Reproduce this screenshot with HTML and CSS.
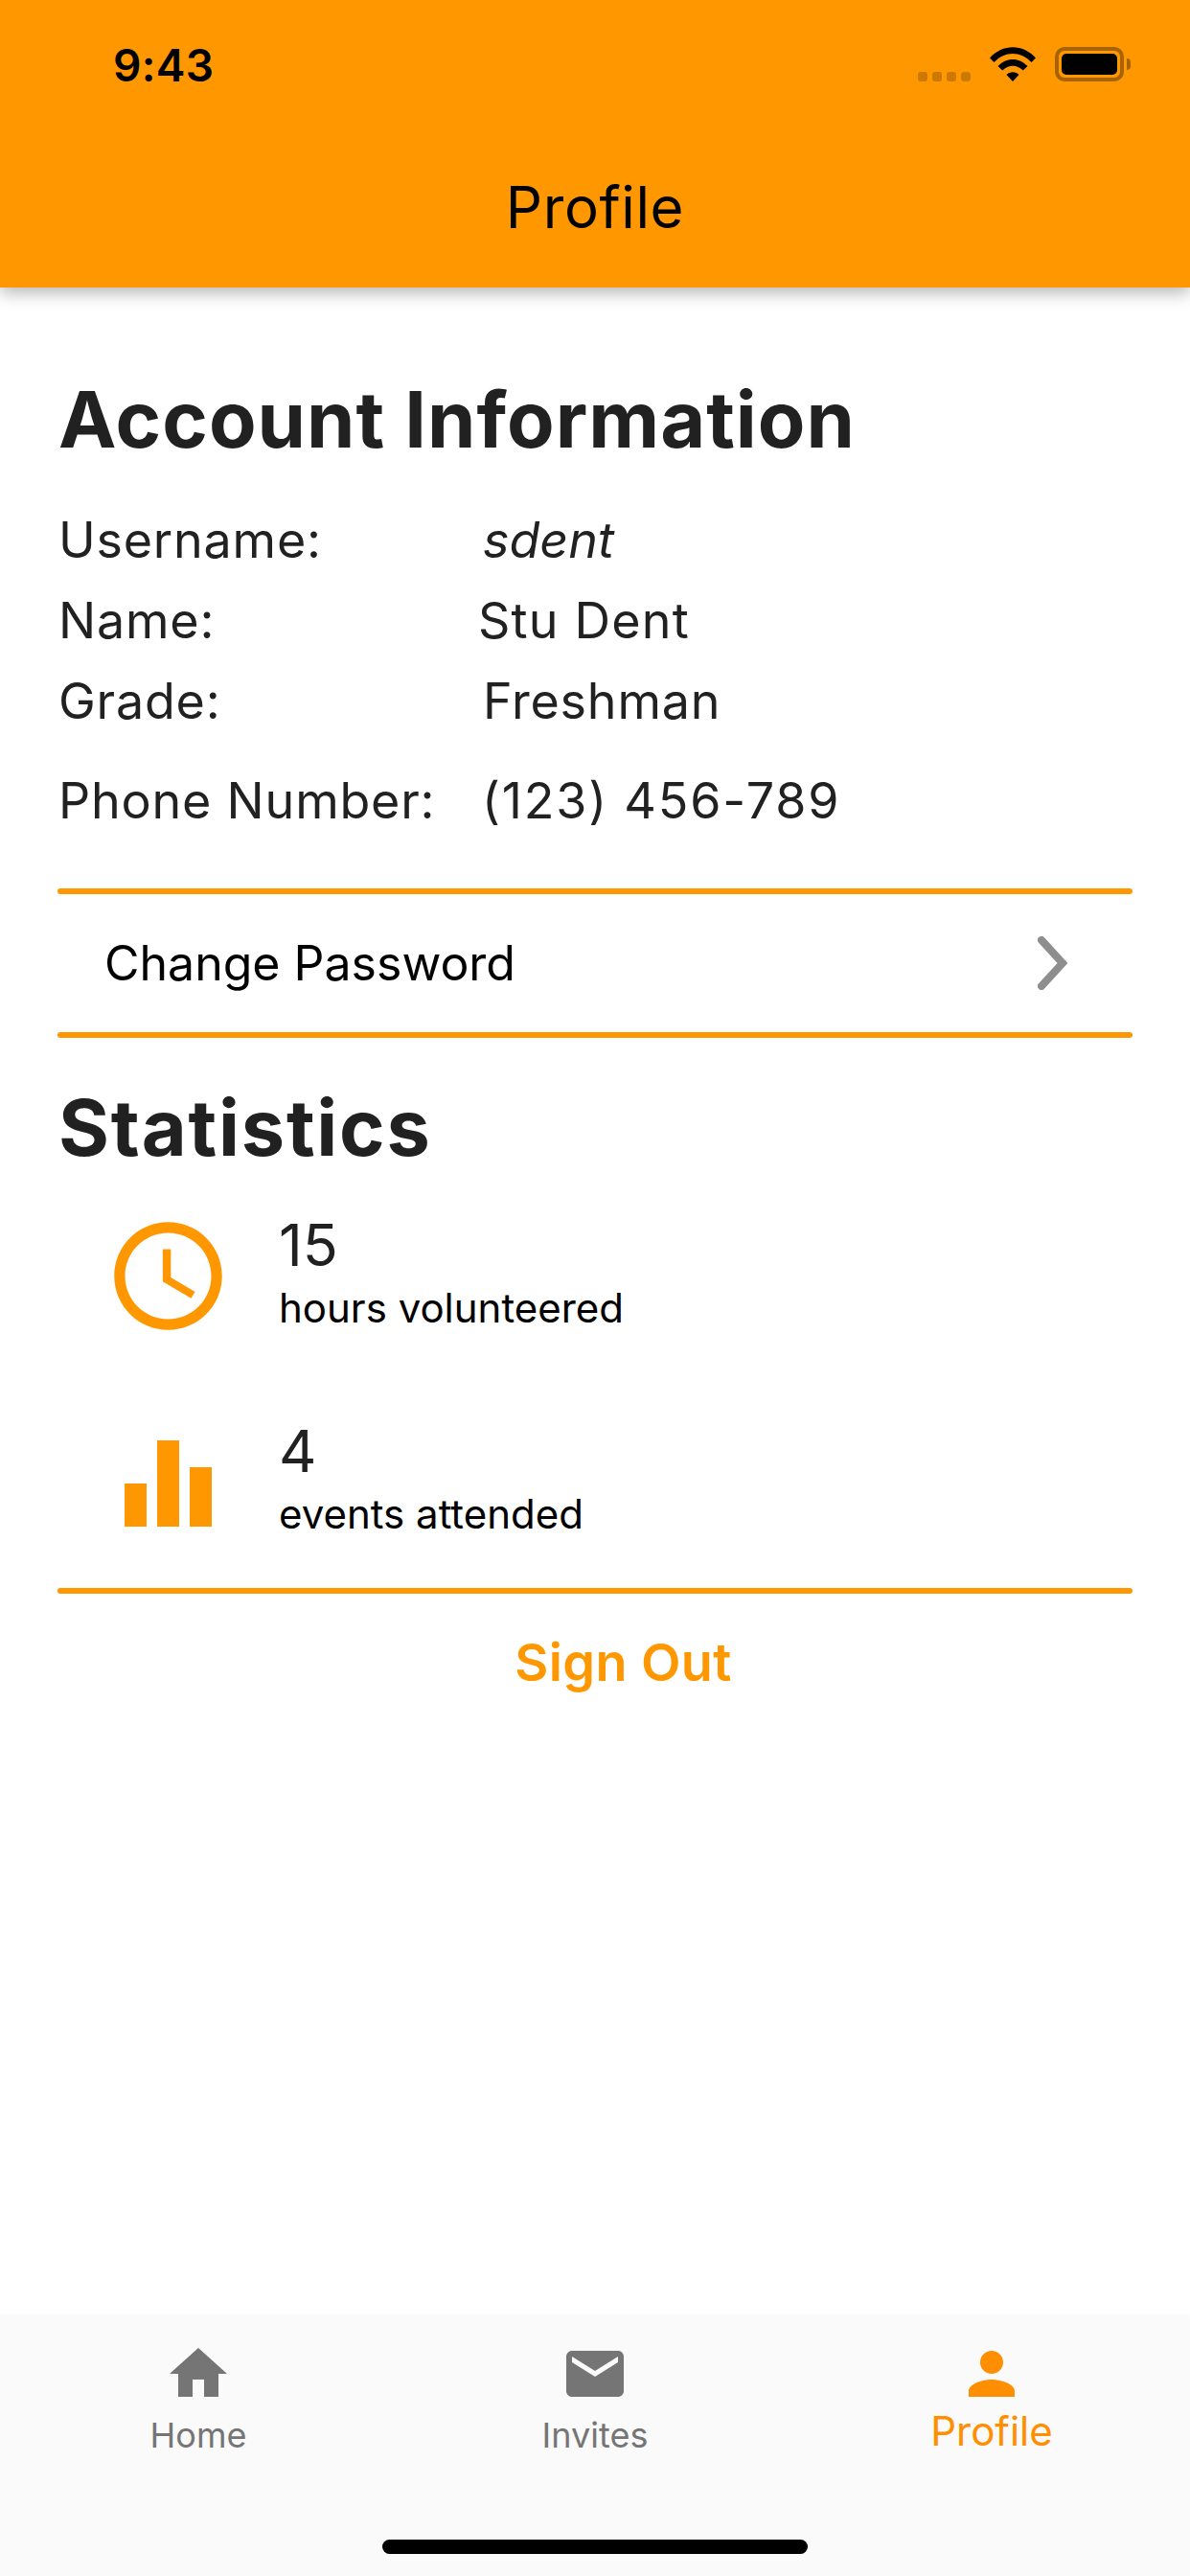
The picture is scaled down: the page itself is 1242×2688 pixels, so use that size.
FILE: index.html
```html
<!DOCTYPE html>
<html lang="en">
<head>
<meta charset="utf-8">
<title>Profile</title>
<link rel="stylesheet" href="styles.css">
</head>
<body>
<div class="screen">
  <header class="app-bar">
    <div class="status-bar">
      <span class="clock">9:43</span>
      <div class="status-icons">
        <div class="signal"><i></i><i></i><i></i><i></i></div>
        <svg class="wifi" width="48" height="36" viewBox="0 0 48 36">
          <path d="M0 11.500 C13.500 -3.500 34.500 -3.500 48 11.500 L43.500 16 C32 4 16 4 4.500 16 Z"/>
          <path d="M8.500 20 C17.500 10.500 30.500 10.500 39.500 20 L34.800 24.600 C28.500 18 19.500 18 13.200 24.600 Z"/>
          <path d="M17.500 29 C21 25.300 27 25.300 30.500 29 L24 36 Z"/>
        </svg>
        <div class="battery"><div class="battery-fill"></div></div>
      </div>
    </div>
    <h1 class="app-title">Profile</h1>
  </header>

  <main class="content">
    <h2 class="section-title">Account Information</h2>
    <dl class="info">
      <dt>Username:</dt><dd class="italic">sdent</dd>
      <dt>Name:</dt><dd class="nudge">Stu Dent</dd>
      <dt>Grade:</dt><dd>Freshman</dd>
      <dt class="phone">Phone Number:</dt><dd class="phone digits">(123) 456-789</dd>
    </dl>
    <div class="divider divider-top"></div>
    <div class="link-row">
      <span>Change Password</span>
      <svg class="chevron" width="32" height="56" viewBox="0 0 32 56">
        <path d="M4 4 L26 28 L4 52"/>
      </svg>
    </div>
    <div class="divider"></div>
    <h2 class="section-title stats-title">Statistics</h2>
    <div class="stat stat-hours">
      <svg class="stat-icon" viewBox="0 0 24 24">
        <path d="M11.990 2C6.470 2 2 6.480 2 12s4.470 10 9.990 10C17.520 22 22 17.520 22 12S17.520 2 11.990 2zM12 20c-4.420 0-8-3.580-8-8s3.580-8 8-8 8 3.580 8 8-3.580 8-8 8z"/>
        <path d="M12.500 7H11v6l5.250 3.150.75-1.230-4.500-2.670z"/>
      </svg>
      <div class="stat-text"><div class="stat-value">15</div><div class="stat-label">hours volunteered</div></div>
    </div>
    <div class="stat stat-events">
      <svg class="stat-icon" viewBox="0 0 135 135">
        <rect x="22" y="69" width="23" height="45"/>
        <rect x="56" y="24" width="23" height="90"/>
        <rect x="90" y="52" width="23" height="62"/>
      </svg>
      <div class="stat-text"><div class="stat-value">4</div><div class="stat-label">events attended</div></div>
    </div>
    <div class="divider divider-bottom"></div>
    <div class="sign-out">Sign Out</div>
  </main>

  <nav class="tab-bar">
    <div class="tabs">
      <div class="tab">
        <svg class="tab-icon" viewBox="0 0 24 24"><path d="M10 20v-6h4v6h5v-8h3L12 3 2 12h3v8z"/></svg>
        <span>Home</span>
      </div>
      <div class="tab">
        <svg class="tab-icon" viewBox="0 0 24 24"><path d="M20 4H4c-1.100 0-1.990.9-1.990 2L2 18c0 1.100.9 2 2 2h16c1.100 0 2-.9 2-2V6c0-1.100-.9-2-2-2zm0 4l-8 5-8-5V6l8 5 8-5v2z"/></svg>
        <span>Invites</span>
      </div>
      <div class="tab active">
        <svg class="tab-icon" viewBox="0 0 24 24"><path d="M12 12c2.210 0 4-1.790 4-4s-1.790-4-4-4-4 1.790-4 4 1.790 4 4 4zm0 2c-2.670 0-8 1.340-8 4v2h16v-2c0-2.660-5.330-4-8-4z"/></svg>
        <span>Profile</span>
      </div>
    </div>
    <div class="home-indicator"></div>
  </nav>
</div>
</body>
</html>
```
FILE: styles.css
```css
* { box-sizing: border-box; }

html, body {
  margin: 0;
  padding: 0;
  background: #fff;
}

.screen {
  width: 1242px;
  height: 2688px;
  display: flex;
  flex-direction: column;
  font-family: Inter, "Liberation Sans", sans-serif;
  overflow: hidden;
}

/* Top bar with the system status row */
.app-bar {
  height: 300px;
  flex: none;
  background: #ff9800;
  box-shadow: 0 6px 16px rgba(0, 0, 0, 0.28);
  position: relative;
  z-index: 1;
}

.status-bar {
  height: 181px;
  padding: 46px 69px 0 118px;
  display: flex;
  justify-content: space-between;
  align-items: flex-start;
}

.clock {
  font-size: 46px;
  line-height: 44px;
  font-weight: 600;
  letter-spacing: 0.3px;
  color: #000;
}

.status-icons {
  display: flex;
  align-items: flex-end;
  padding-top: 3px;
}

.signal {
  display: flex;
  gap: 5px;
  margin-right: 20px;
}

.signal i {
  width: 10px;
  height: 10px;
  border-radius: 3px;
  background: rgba(0, 0, 0, 0.2);
}

.wifi {
  display: block;
  fill: #000;
  margin-right: 20px;
}

.battery {
  width: 72px;
  height: 36px;
  border: 4px solid rgba(0, 0, 0, 0.35);
  border-radius: 10px;
  padding: 3px;
  position: relative;
}

.battery::after {
  content: "";
  position: absolute;
  right: -11px;
  top: 8px;
  width: 4px;
  height: 12px;
  border-radius: 0 6px 6px 0;
  background: rgba(0, 0, 0, 0.35);
}

.battery-fill {
  height: 100%;
  background: #000;
  border-radius: 5px;
}

.app-title {
  margin: 0;
  text-align: center;
  font-size: 60px;
  line-height: 70px;
  font-weight: 400;
  letter-spacing: 0.6px;
  color: #000;
}

.content {
  flex: 1;
  padding: 0 60px 0 61px;
}

.section-title {
  margin: 0;
  font-size: 81px;
  line-height: 96px;
  font-weight: 700;
  letter-spacing: 1px;
  color: #212121;
  padding-top: 90px;
}

.stats-title {
  padding-top: 46px;
  letter-spacing: 1.800px;
}

.info {
  margin: 36px 0 0;
  display: grid;
  grid-template-columns: 443px 1fr;
  font-size: 52px;
  line-height: 84px;
  letter-spacing: 0.8px;
  color: #212121;
}

.info dt, .info dd {
  margin: 0;
}

.info dd.italic { font-style: italic; letter-spacing: 0; }
.info dd.nudge { margin-left: -5px; letter-spacing: 1.200px; }
.info .phone { margin-top: 20px; }
.info dd.digits { margin-left: -1px; letter-spacing: 1.800px; }

/* Rounded orange rules between the sections */
.divider {
  height: 6px;
  margin-left: -1px;
  border-radius: 3px;
  background: #ff9800;
}

.divider-top {
  margin-top: 49px;
}

.divider-bottom {
  margin-top: 43px;
}

.link-row {
  height: 144px;
  padding: 0 67px 0 48px;
  display: flex;
  justify-content: space-between;
  align-items: center;
  font-size: 50px;
  color: #000;
}

.chevron {
  fill: none;
  stroke: #8e8e8e;
  stroke-width: 8;
  stroke-linecap: round;
  stroke-linejoin: miter;
}

.stat {
  display: flex;
  align-items: center;
  padding-left: 47px;
  height: 135px;
  color: #212121;
}

.stat-hours {
  margin-top: 39px;
}

.stat-events {
  margin-top: 80px;
}

.stat-icon {
  width: 135px;
  height: 135px;
  fill: #ff9800;
  flex: none;
  margin-right: 48px;
}

.stat-text {
  padding-bottom: 11px;
}

.stat-value {
  font-size: 61px;
  line-height: 72px;
}

.stat-label {
  margin-top: 5px;
  font-size: 42px;
  line-height: 50px;
  color: #000;
}

.sign-out {
  padding: 40px 0 0 58px;
  text-align: center;
  font-size: 54px;
  line-height: 64px;
  font-weight: 600;
  letter-spacing: 0.4px;
  color: #ff9800;
}

/* Bottom navigation */
.tab-bar {
  height: 271px;
  flex: none;
  background: #fafafa;
  box-shadow: 0 -1px 3px rgba(0, 0, 0, 0.04);
  display: flex;
  flex-direction: column;
  align-items: center;
}

.tabs {
  width: 100%;
  display: grid;
  grid-template-columns: repeat(3, 1fr);
  padding-top: 24px;
}

.tab {
  display: flex;
  flex-direction: column;
  align-items: center;
  font-size: 36px;
  line-height: 44px;
  color: #757575;
}

.tab-icon {
  width: 72px;
  height: 72px;
  fill: currentColor;
  margin-bottom: 6px;
}

.tab.active {
  color: #ff8f00;
  font-size: 42px;
  line-height: 44px;
}

.tab.active .tab-icon {
  margin-bottom: 2px;
}

.home-indicator {
  width: 444px;
  height: 15px;
  margin-top: 87px;
  border-radius: 8px;
  background: #000;
}
```
